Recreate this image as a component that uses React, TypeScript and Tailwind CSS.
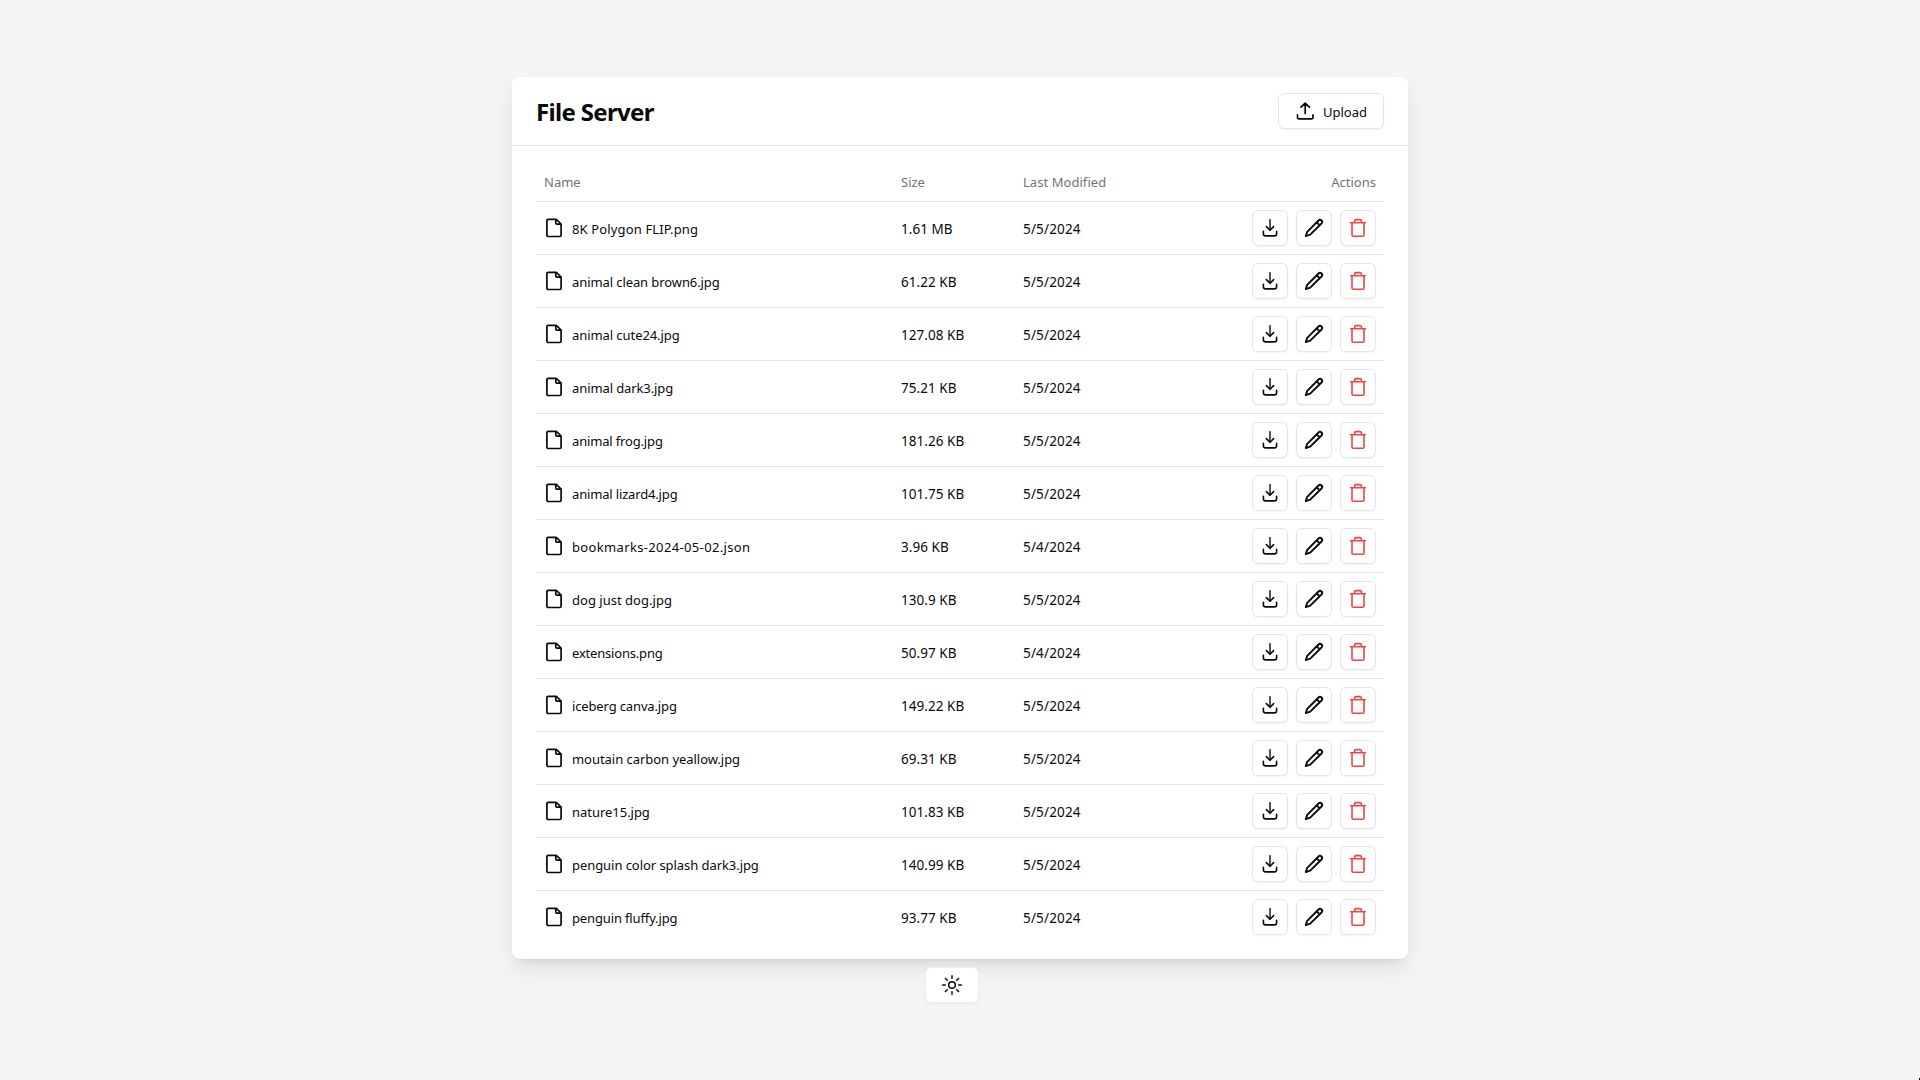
import type { ReactNode } from "react";

const files: [string, string, string, string][] = [
  ["8K Polygon FLIP.png", "1.61 MB", "5/5/2024", "tracking-[0.14px]"],
  ["animal clean brown6.jpg", "61.22 KB", "5/5/2024", "tracking-[-0.09px]"],
  ["animal cute24.jpg", "127.08 KB", "5/5/2024", "tracking-[-0.07px]"],
  ["animal dark3.jpg", "75.21 KB", "5/5/2024", "tracking-[-0.1px]"],
  ["animal frog.jpg", "181.26 KB", "5/5/2024", "tracking-[-0.16px]"],
  ["animal lizard4.jpg", "101.75 KB", "5/5/2024", "tracking-[-0.16px]"],
  ["bookmarks-2024-05-02.json", "3.96 KB", "5/4/2024", "tracking-[0.35px]"],
  ["dog just dog.jpg", "130.9 KB", "5/5/2024", "tracking-[0.02px]"],
  ["extensions.png", "50.97 KB", "5/4/2024", "tracking-[-0.19px]"],
  ["iceberg canva.jpg", "149.22 KB", "5/5/2024", "tracking-[-0.14px]"],
  ["moutain carbon yeallow.jpg", "69.31 KB", "5/5/2024", "tracking-[-0.04px]"],
  ["nature15.jpg", "101.83 KB", "5/5/2024", "tracking-[-0.03px]"],
  ["penguin color splash dark3.jpg", "140.99 KB", "5/5/2024", "tracking-[-0.06px]"],
  ["penguin fluffy.jpg", "93.77 KB", "5/5/2024", "tracking-[-0.14px]"],
];

function Icon({ children, width = 1.5 }: { children: ReactNode; width?: number }) {
  return (
    <svg
      viewBox="0 0 20 20"
      className="size-5 shrink-0"
      fill="none"
      stroke="currentColor"
      strokeWidth={width}
      strokeLinecap="round"
      strokeLinejoin="round"
      aria-hidden="true"
    >
      {children}
    </svg>
  );
}

const FileIcon = () => (
  <Icon width={1.7}>
    <path d="M12.3 1.3H4.2A1.3 1.3 0 0 0 2.9 2.6v14.6a1.3 1.3 0 0 0 1.3 1.3h11.6a1.3 1.3 0 0 0 1.3-1.3V6zM11.8 1.6v3.5a1.1 1.1 0 0 0 1.1 1.1h3.8" />
  </Icon>
);

const DownloadIcon = () => (
  <Icon width={1.6}>
    <path d="M3.4 13.2v2.6a2.1 2.1 0 0 0 2.1 2.1h9a2.1 2.1 0 0 0 2.1-2.1v-2.6M6.4 8.6l3.6 3.7 3.6-3.7" />
    <path d="M10 1.6v10.4" strokeWidth={1.4} />
  </Icon>
);

const UploadIcon = () => (
  <Icon width={1.7}>
    <path d="M2.5 13.9v2.6a1.3 1.3 0 0 0 1.3 1.3h12.9a1.3 1.3 0 0 0 1.3-1.3v-2.6M10.2 12.4V2.3M6 6.2l4.2-4.1 4.2 4.1" />
  </Icon>
);

const PencilIcon = () => (
  <Icon width={1.9}>
    <path d="M1.8 18.1 3.2 13.8 14.5 2.5a2.1 2.1 0 0 1 3 3L6.2 16.7zM12.7 4.3l3 3" />
  </Icon>
);

const TrashIcon = () => (
  <Icon width={1.6}>
    <path d="M2.6 4.8h14.8M6.6 4.6V3.1a1.5 1.5 0 0 1 1.5-1.5h3.8a1.5 1.5 0 0 1 1.5 1.5v1.5M4 5v11.9a1.3 1.3 0 0 0 1.3 1.3h9.4a1.3 1.3 0 0 0 1.3-1.3V5" />
  </Icon>
);

const SunIcon = () => (
  <Icon>
    <circle cx="10" cy="10" r="3.3" />
    <path
      strokeLinecap="butt"
      d="M10 .2v3.6M10 16.2v3.6M.2 10h3.6M16.2 10h3.6M3 3l2.7 2.7M14.3 14.3 17 17M3 17l2.7-2.7M14.3 5.7 17 3"
    />
  </Icon>
);

const iconButton =
  "flex size-9 items-center justify-center rounded-md border border-[#e5e5e5] bg-white shadow-xs";

export default function App() {
  return (
    <div className="relative flex h-screen flex-col items-center overflow-hidden bg-[#f3f4f6] pt-[77px] font-['Noto_Sans','Open_Sans',sans-serif] text-[13px] leading-5 text-[#0a0a0a]">
      <main className="w-full max-w-4xl shrink-0 rounded-lg bg-white shadow-[0_10px_20px_-4px_rgb(0_0_0/0.12),0_4px_6px_-4px_rgb(0_0_0/0.1)]">
        <header className="flex items-center justify-between border-b border-[#e5e5e5] px-6 py-4">
          <h1 className="pt-0.5 text-2xl leading-8 font-bold tracking-[-0.66px]">File Server</h1>
          <button className="flex h-9 w-[106px] items-center rounded-md border border-[#e5e5e5] bg-white px-4 shadow-xs">
            <span className="mr-2">
              <UploadIcon />
            </span>
            <span className="pt-0.5">Upload</span>
          </button>
        </header>
        <div className="px-6 py-4">
          <div className="grid h-10 grid-cols-[357px_122px_1fr_auto] items-center border-b border-[#e5e5e5] px-2 text-[#737373]">
            <span>Name</span>
            <span>Size</span>
            <span className="tracking-[0.05px]">Last Modified</span>
            <span>Actions</span>
          </div>
          {files.map(([name, size, date, tracking]) => (
            <div
              key={name}
              className="grid grid-cols-[357px_122px_1fr_auto] items-center border-b border-[#e5e5e5] p-2 last:border-b-0"
            >
              <div className="flex items-center gap-2">
                <FileIcon />
                <span className={`pt-0.5 ${tracking}`}>{name}</span>
              </div>
              <span className="pt-0.5 text-[13.5px] tracking-[0.05px]">{size}</span>
              <span className="pt-0.5 text-[13.5px] tracking-[0.16px]">{date}</span>
              <div className="flex gap-2">
                <button className={iconButton} aria-label="Download">
                  <DownloadIcon />
                </button>
                <button className={iconButton} aria-label="Rename">
                  <PencilIcon />
                </button>
                <button className={`${iconButton} text-[#ef4444]`} aria-label="Delete">
                  <TrashIcon />
                </button>
              </div>
            </div>
          ))}
        </div>
      </main>
      <button
        className="mt-2 mr-4 flex h-9 w-[54px] shrink-0 items-center justify-center rounded-md border border-[#f0eeed] bg-white shadow-xs"
        aria-label="Toggle theme"
      >
        <SunIcon />
      </button>
      <div className="absolute right-0 bottom-0 h-0.5 w-px bg-black" />
    </div>
  );
}
